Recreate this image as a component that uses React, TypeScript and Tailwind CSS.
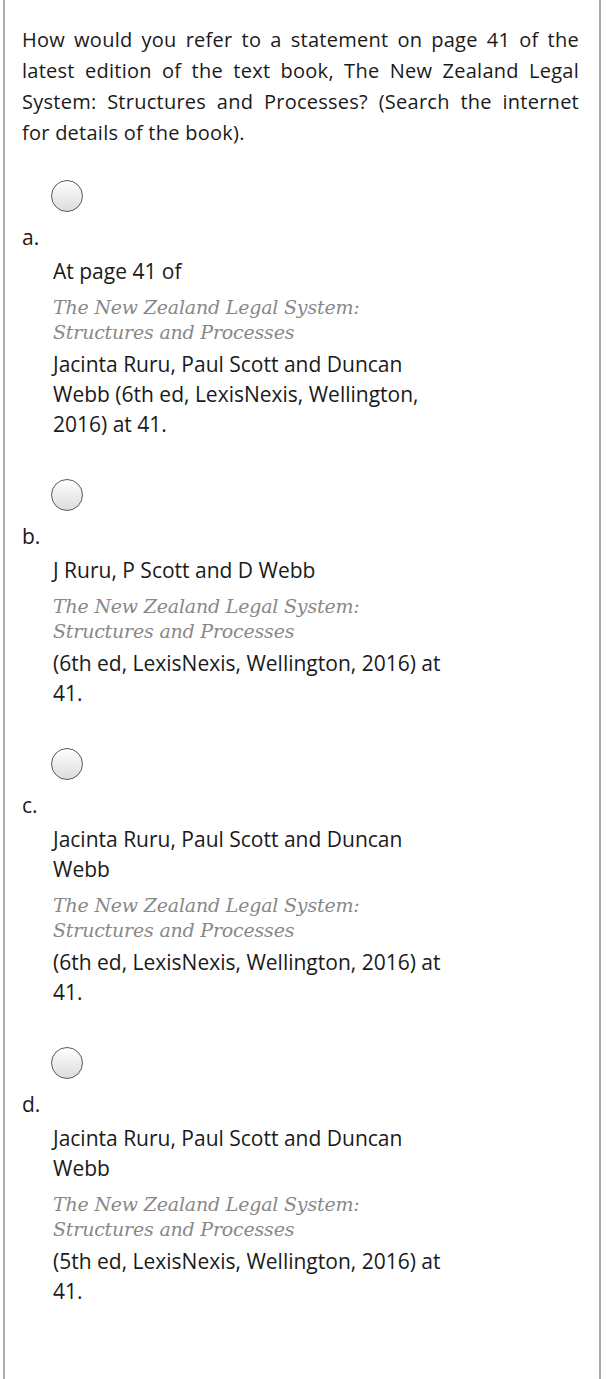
import React from "react";

type Option = {
  letter: string;
  before: string[];
  after: string[];
};

const options: Option[] = [
  {
    letter: "a.",
    before: ["At page 41 of"],
    after: ["Jacinta Ruru, Paul Scott and Duncan Webb (6th ed, LexisNexis, Wellington, 2016) at 41."],
  },
  {
    letter: "b.",
    before: ["J Ruru, P Scott and D Webb"],
    after: ["(6th ed, LexisNexis, Wellington, 2016) at 41."],
  },
  {
    letter: "c.",
    before: ["Jacinta Ruru, Paul Scott and Duncan Webb"],
    after: ["(6th ed, LexisNexis, Wellington, 2016) at 41."],
  },
  {
    letter: "d.",
    before: ["Jacinta Ruru, Paul Scott and Duncan Webb"],
    after: ["(5th ed, LexisNexis, Wellington, 2016) at 41."],
  },
];

// Plain radio circle, like the old mobile browser default
function Radio() {
  return (
    <div className="ml-[29px] w-[32px] h-[32px] rounded-full border-[1.5px] border-[#5a5a5a] bg-gradient-to-b from-white to-[#dcdcdc]" />
  );
}

function Choice({ option }: { option: Option }) {
  return (
    <div className="flex flex-col">
      <Radio />
      <div className="mt-[10px] text-[21px] leading-[30px]">{option.letter}</div>
      <div className="mt-[4px] pl-[31px] w-[431px] text-[21px] leading-[30px]">
        {option.before.map((t) => (
          <div key={t}>{t}</div>
        ))}
        <div className="mt-[9px] mb-[4px] text-[#888888] italic text-[19px] leading-[25px] font-['DejaVu_Serif',serif] tracking-[-0.2px]">
          The New Zealand Legal System:
          <br />
          Structures and Processes
        </div>
        {option.after.map((t) => (
          <div key={t}>{t}</div>
        ))}
      </div>
    </div>
  );
}

export default function App() {
  return (
    <div className="min-h-[1379px] bg-white font-['Open_Sans',sans-serif] text-[#1a1a1a]">
      <div className="ml-[3px] w-[598px] min-h-[1379px] border-x-2 border-[#ababab] pl-[17px] pr-[20px] pt-[24px] pb-[60px]">
        <p className="text-[20px] leading-[31px] text-justify tracking-[0.25px]">
          How would you refer to a statement on page 41 of the latest edition of the text book, The New Zealand Legal
          System: Structures and Processes? (Search the internet for details of the book).
        </p>
        <div className="mt-[32px] flex flex-col gap-[40px]">
          {options.map((o) => (
            <Choice key={o.letter} option={o} />
          ))}
        </div>
      </div>
    </div>
  );
}
